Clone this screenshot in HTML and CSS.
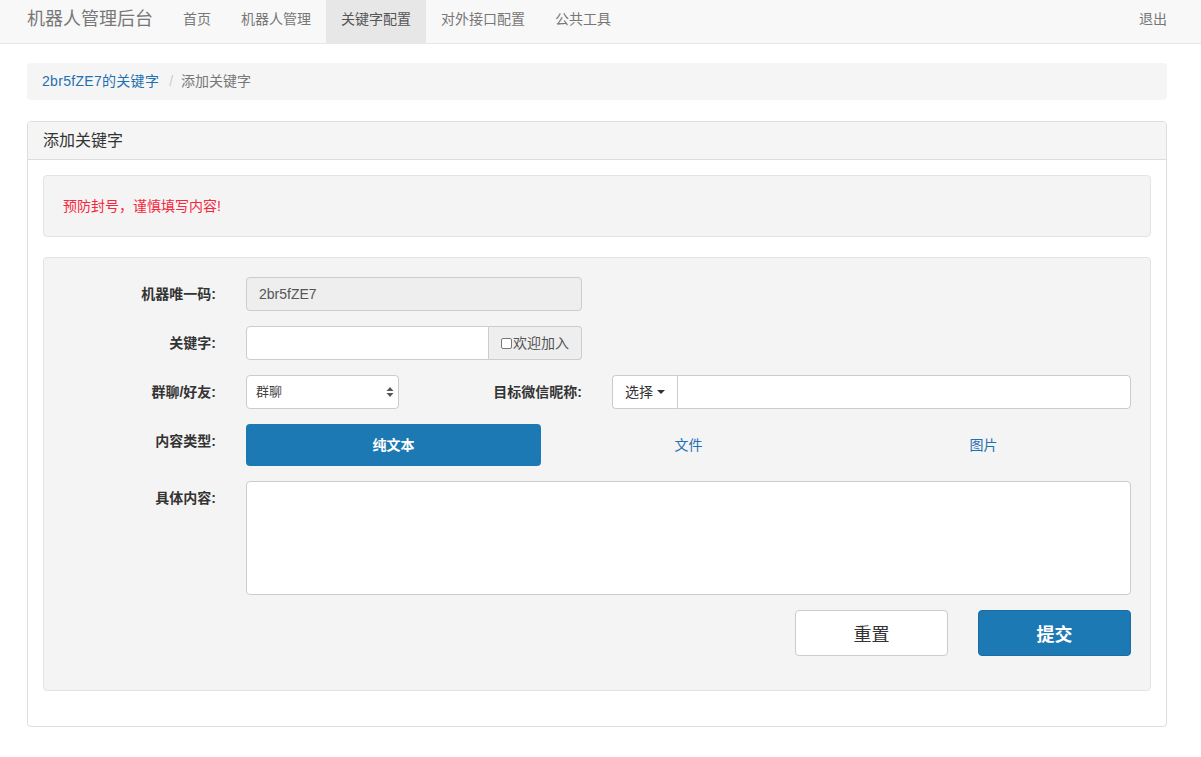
FILE: index.html
```html
<!DOCTYPE html>
<html lang="zh">
<head>
<meta charset="utf-8">
<title>添加关键字</title>
<link rel="stylesheet" href="styles.css">
</head>
<body>
<nav class="navbar">
  <div class="container nav-inner">
    <a class="brand">机器人管理后台</a>
    <ul class="nav-links">
      <li><a>首页</a></li>
      <li><a>机器人管理</a></li>
      <li class="active"><a>关键字配置</a></li>
      <li><a>对外接口配置</a></li>
      <li><a>公共工具</a></li>
    </ul>
    <ul class="nav-links nav-right">
      <li><a>退出</a></li>
    </ul>
  </div>
</nav>

<div class="container">
  <ol class="breadcrumb">
    <li><a class="link">2br5fZE7的关键字</a></li>
    <li class="sep">/</li>
    <li class="current">添加关键字</li>
  </ol>

  <div class="panel">
    <div class="panel-heading">添加关键字</div>
    <div class="panel-body">
      <div class="well warn">预防封号，谨慎填写内容!</div>

      <div class="well form-well">
        <div class="form-row">
          <label class="lbl col-2">机器唯一码:</label>
          <div class="col-4">
            <div class="input disabled">2br5fZE7</div>
          </div>
        </div>

        <div class="form-row">
          <label class="lbl col-2">关键字:</label>
          <div class="col-4">
            <div class="input-group">
              <div class="input grow left"></div>
              <div class="addon"><span class="cb"></span>欢迎加入</div>
            </div>
          </div>
        </div>

        <div class="form-row">
          <label class="lbl col-2">群聊/好友:</label>
          <div class="col-2">
            <div class="input select">
              <span>群聊</span>
              <svg width="8" height="12" viewBox="0 0 8 12"><path d="M4 1 L7.5 5 H0.5 Z M4 11 L0.5 7 H7.5 Z" fill="#555"/></svg>
            </div>
          </div>
          <label class="lbl col-2">目标微信昵称:</label>
          <div class="col-6">
            <div class="input-group">
              <div class="btn-select">选择 <span class="caret"></span></div>
              <div class="input grow right"></div>
            </div>
          </div>
        </div>

        <div class="form-row">
          <label class="lbl col-2">内容类型:</label>
          <div class="col-10">
            <ul class="pills">
              <li class="pill active">纯文本</li>
              <li class="pill">文件</li>
              <li class="pill">图片</li>
            </ul>
          </div>
        </div>

        <div class="form-row">
          <label class="lbl col-2">具体内容:</label>
          <div class="col-10">
            <div class="textarea"></div>
          </div>
        </div>

        <div class="form-row last">
          <div class="col-2 offset-8">
            <button class="btn btn-default">重置</button>
          </div>
          <div class="col-2">
            <button class="btn btn-primary">提交</button>
          </div>
        </div>
      </div>
    </div>
  </div>
</div>
</body>
</html>
```

FILE: styles.css
```css
* { box-sizing: border-box; }
html, body { margin: 0; padding: 0; }
body {
  font-family: "Liberation Sans", "Noto Sans CJK SC", sans-serif;
  font-size: 14px;
  line-height: 20px;
  color: #333;
  background: #fff;
}
ul, ol { list-style: none; margin: 0; padding: 0; }
a { text-decoration: none; }

.container {
  width: 1170px;
  margin-left: 12px;
  padding: 0 15px;
}

/* navbar */
.navbar {
  height: 44px;
  background: #f8f8f8;
  border-bottom: 1px solid #e7e7e7;
  margin-bottom: 19px;
}
.nav-inner {
  display: flex;
  height: 43px;
  align-items: stretch;
}
.brand {
  margin-left: -15px;
  padding: 0 15px 6px;
  font-size: 18px;
  color: #777;
  display: flex;
  align-items: center;
  height: 43px;
}
.nav-links { display: flex; }
.nav-links li a {
  display: flex;
  align-items: center;
  height: 43px;
  padding: 0 15px 6px;
  color: #777;
  font-size: 14px;
}
.nav-links li.active a {
  background: #e7e7e7;
  color: #555;
}
.nav-right { margin-left: auto; margin-right: -15px; }

/* breadcrumb */
.breadcrumb {
  display: flex;
  background: #f5f5f5;
  border-radius: 4px;
  padding: 8px 15px 9px;
  margin-bottom: 21px;
  height: 37px;
  align-items: center;
}
.breadcrumb .link { color: #1f70b0; letter-spacing: 0.3px; }
.breadcrumb .sep { color: #ccc; padding: 0 8px 0 10px; }
.breadcrumb .current { color: #777; }

/* panel */
.panel {
  border: 1px solid #ddd;
  border-radius: 4px;
  background: #fff;
}
.panel-heading {
  background: #f5f5f5;
  border-bottom: 1px solid #ddd;
  border-radius: 3px 3px 0 0;
  height: 38px;
  padding: 0 15px;
  display: flex;
  align-items: center;
  font-size: 16px;
  color: #333;
}
.panel-body { padding: 15px; }

.well {
  background: #f4f4f4;
  border: 1px solid #e3e3e3;
  border-radius: 4px;
  margin-bottom: 20px;
}
.warn {
  color: #f5283e;
  padding: 20px 19px;
  height: 62px;
  display: flex;
  align-items: center;
}
.form-well {
  padding: 19px;
  margin-bottom: 20px;
}

/* grid */
.form-row {
  display: flex;
  margin: 0 -15px 15px;
}
.form-row.last { margin-bottom: 15px; }
.col-2, .col-4, .col-6, .col-10 { padding: 0 15px; flex: none; }
.col-2 { width: 16.6667%; }
.col-4 { width: 33.3333%; }
.col-6 { width: 50%; }
.col-10 { width: 83.3333%; }
.offset-8 { margin-left: 66.6667%; }

.lbl {
  text-align: right;
  font-weight: bold;
  padding-top: 7px;
  color: #333;
}

.input {
  height: 34px;
  border: 1px solid #ccc;
  border-radius: 4px;
  background: #fff;
  padding: 6px 12px;
  color: #555;
  font-size: 14px;
  display: flex;
  align-items: center;
}
.input.disabled { background: #eee; }
.input-group { display: flex; }
.grow { flex: 1; }
.input.left { border-radius: 4px 0 0 4px; }
.input.right { border-radius: 0 4px 4px 0; }
.addon {
  height: 34px;
  background: #eee;
  border: 1px solid #ccc;
  border-left: 0;
  border-radius: 0 4px 4px 0;
  padding: 0 12px;
  display: flex;
  align-items: center;
  color: #555;
  font-size: 14px;
}
.cb {
  display: inline-block;
  width: 11px;
  height: 11px;
  border: 1px solid #777;
  border-radius: 2px;
  background: #fff;
  margin-right: 1px;
}
.select {
  justify-content: space-between;
  padding: 6px 4px 6px 9px;
  font-size: 13px;
  font-weight: normal;
  color: #444;
}
.btn-select {
  height: 34px;
  border: 1px solid #ccc;
  border-right: 0;
  border-radius: 4px 0 0 4px;
  background: #fff;
  padding: 0 12px;
  display: flex;
  align-items: center;
  color: #333;
  font-size: 14px;
  width: 65px;
}
.caret {
  display: inline-block;
  width: 0;
  height: 0;
  border-top: 4px solid #333;
  border-left: 4px solid transparent;
  border-right: 4px solid transparent;
  margin-left: 4px;
}

.pills { display: flex; }
.pill {
  flex: 1;
  height: 42px;
  display: flex;
  align-items: center;
  justify-content: center;
  color: #1f70b0;
  font-size: 14px;
  border-radius: 4px;
}
.pill.active {
  background: #1d79b3;
  color: #fff;
  font-weight: bold;
}

.textarea {
  height: 114px;
  border: 1px solid #ccc;
  border-radius: 4px;
  background: #fff;
}

.btn {
  display: block;
  width: 100%;
  height: 46px;
  border-radius: 4px;
  font-family: inherit;
  font-size: 18px;
  padding: 0;
  cursor: pointer;
}
.btn-default {
  background: #fff;
  border: 1px solid #ccc;
  color: #333;
}
.btn-primary {
  background: #1d79b3;
  border: 1px solid #1a6ca2;
  color: #fff;
  font-weight: bold;
}
```
